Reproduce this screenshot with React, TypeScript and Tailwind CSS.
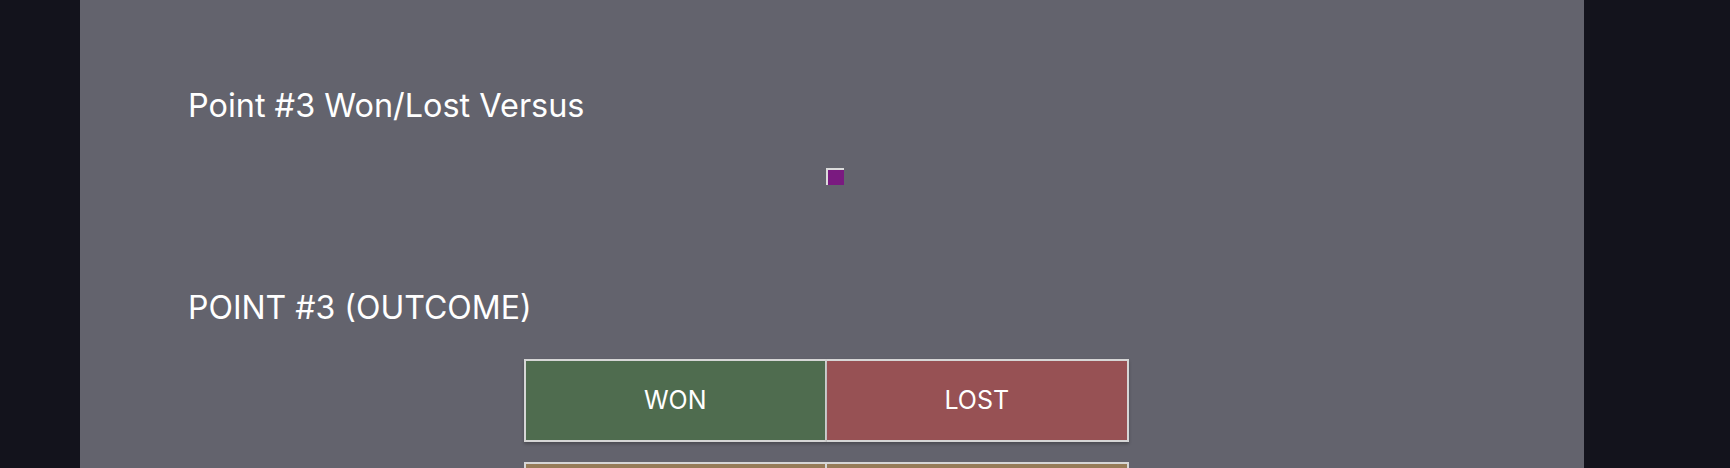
export default function App() {
  return (
    <div className="min-h-screen w-full bg-[#13131c] flex" style={{ fontFamily: 'Inter, "Noto Sans", sans-serif' }}>
      <div className="ml-[80px] w-[1504px] min-h-[468px] bg-[#63636d] pt-[86px] pl-[108px] text-white">
        <h2 className="text-[32.4px] leading-[40px] font-normal">Point #3 Won/Lost Versus</h2>

        <div className="mt-[42px] ml-[638px] w-[18px] h-[17px] bg-[#7a1a80] border-t-2 border-l-2 border-[#dcdcdc]" />

        <h2 className="mt-[103px] text-[32px] leading-[40px] font-normal">POINT #3 (OUTCOME)</h2>

        <div className="mt-[31px] ml-[336px] w-[605px] grid grid-cols-2 gap-y-[20px]">
          <button className="h-[83px] bg-[#4f6c4f] border-2 border-[#d6d6d6] text-[25px] text-white shadow-[0_2px_3px_rgba(0,0,0,0.25)]">WON</button>
          <button className="h-[83px] bg-[#975154] border-2 border-l-0 border-[#d6d6d6] text-[25px] text-white shadow-[0_2px_3px_rgba(0,0,0,0.25)]">LOST</button>
          <div className="h-[83px] bg-[#957b58] border-2 border-[#d6d6d6]" />
          <div className="h-[83px] bg-[#957b58] border-2 border-l-0 border-[#d6d6d6]" />
        </div>
      </div>
    </div>
  )
}
